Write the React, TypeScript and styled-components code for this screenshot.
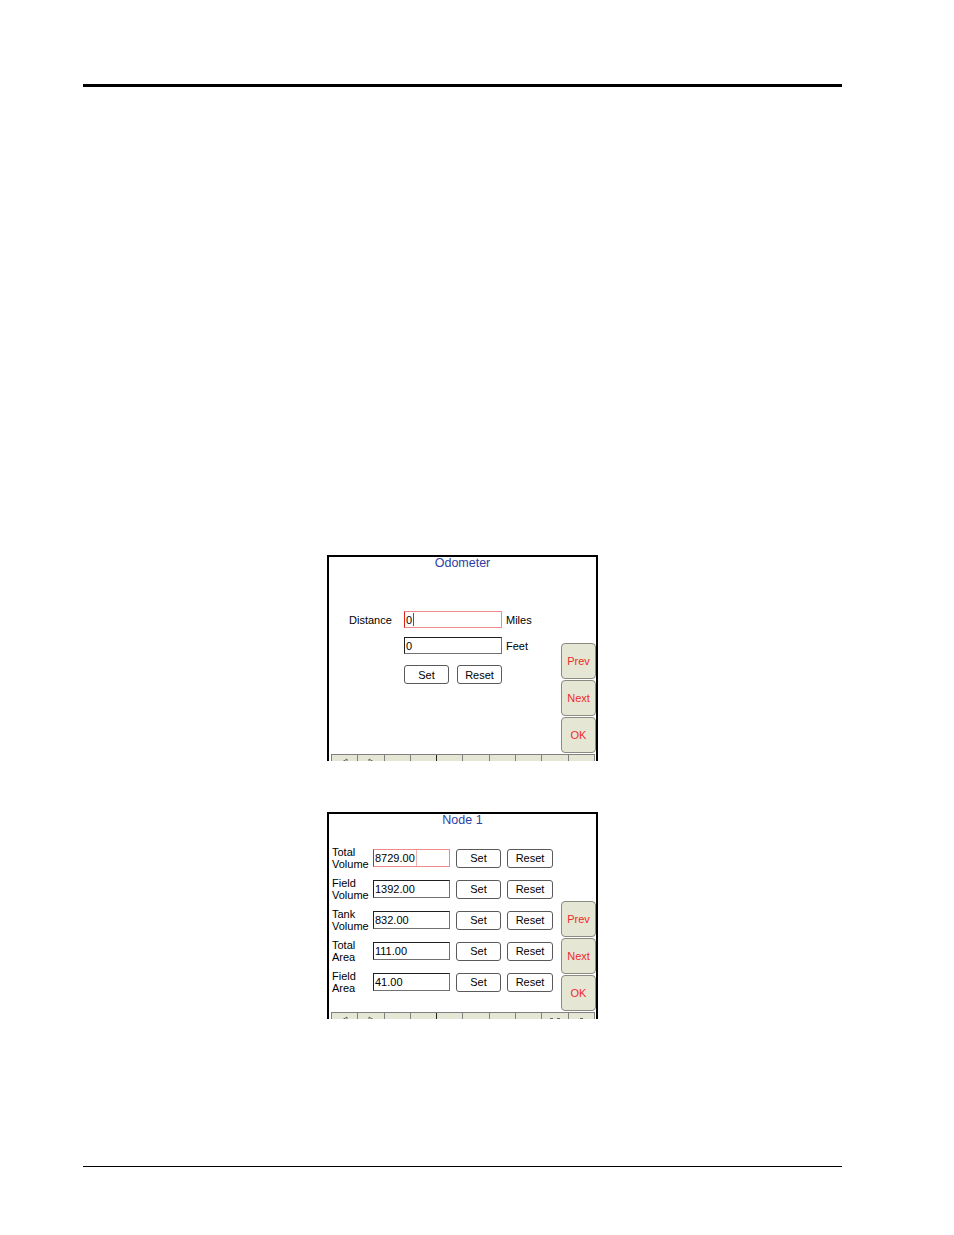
import React from 'react';
import styled, { createGlobalStyle } from 'styled-components';

const GlobalStyle = createGlobalStyle`
  html, body {
    margin: 0;
    padding: 0;
    background: #ffffff;
  }
  body {
    font-family: "Liberation Sans", Arial, sans-serif;
  }
`;

const Page = styled.div`
  width: 954px;
  height: 1235px;
  box-sizing: border-box;
  padding: 84px 112px 0 83px;
  display: flex;
  flex-direction: column;
  align-items: center;
`;

const TopRule = styled.div`
  width: 100%;
  height: 3px;
  background: #000;
`;

const Figures = styled.div`
  margin-top: 468px;
  display: flex;
  flex-direction: column;
  align-items: center;
  gap: 51px;
`;

const BottomRule = styled.div`
  margin-top: 147px;
  width: 100%;
  height: 1px;
  background: #000;
`;

const Screen = styled.div<{ $h: number }>`
  width: 271px;
  height: ${(p) => p.$h}px;
  box-sizing: border-box;
  border: 2px solid #000;
  border-bottom: none;
  background: #fff;
  overflow: hidden;
  display: flex;
  flex-direction: column;
  font-family: "Liberation Sans", Arial, sans-serif;
  font-size: 11px;
  color: #000;
`;

const Title = styled.div`
  height: 16px;
  line-height: 13px;
  text-align: center;
  color: #2b3fa6;
  font-size: 12.5px;
`;

const Body = styled.div`
  flex: 1;
  display: grid;
  grid-template-columns: 1fr 35px;
  min-height: 0;
`;

const SideCol = styled.div`
  display: flex;
  flex-direction: column;
  justify-content: flex-end;
  gap: 1px;
  padding-bottom: 1px;
`;

const SideButton = styled.div`
  height: 36px;
  box-sizing: border-box;
  border: 1px solid #8a8a80;
  border-radius: 4px;
  background: #e6e6d4;
  color: #ee2a2a;
  font-size: 11px;
  display: flex;
  align-items: center;
  justify-content: center;
`;

const TabStrip = styled.div`
  margin: 0 1px 0 2px;
  height: 6px;
  flex-shrink: 0;
  overflow: hidden;
  display: grid;
  grid-template-columns: repeat(10, 1fr);
  border-top: 1px solid #808080;
  border-left: 1px solid #808080;
  background: #e6e6d4;
`;

const Tab = styled.div<{ $dark?: boolean }>`
  border-right: 1px solid ${(p) => (p.$dark ? '#202020' : '#808080')};
  display: flex;
  justify-content: center;
  padding-top: 3px;
`;

/* odometer screen */
const OdoMain = styled.div`
  padding: 38px 0 0 20px;
  display: grid;
  grid-template-columns: 51px 98px auto;
  grid-auto-rows: min-content;
  column-gap: 4px;
  align-content: start;
`;

const Label = styled.div`
  font-size: 11px;
  align-self: center;
  line-height: 12px;
`;

const Spacer = styled.div<{ $h: number }>`
  height: ${(p) => p.$h}px;
  grid-column: 1 / 4;
`;

const Field = styled.div<{ $active?: boolean }>`
  height: 17px;
  box-sizing: border-box;
  border: 1px solid ${(p) => (p.$active ? '#f08a8a' : '#707070')};
  border-left-color: ${(p) => (p.$active ? '#e01e1e' : '#202020')};
  border-top-color: ${(p) => (p.$active ? '#f08a8a' : '#202020')};
  display: flex;
  align-items: center;
  font-size: 11px;
  padding-left: 1px;
  background: #fff;
  position: relative;
`;

const Caret = styled.span`
  display: inline-block;
  width: 1px;
  height: 13px;
  background: #d02020;
  margin-left: 1px;
`;

const Divider = styled.span`
  position: absolute;
  left: 42px;
  top: 0;
  bottom: 0;
  width: 1px;
  background: #f3b0b0;
`;

const Btn = styled.div<{ $w: number }>`
  width: ${(p) => p.$w}px;
  height: 19px;
  box-sizing: border-box;
  border: 1px solid #5a5a5a;
  border-radius: 3px;
  display: flex;
  align-items: center;
  justify-content: center;
  font-size: 11px;
  background: #fff;
`;

const BtnRow = styled.div<{ $gap: number }>`
  display: flex;
  gap: ${(p) => p.$gap}px;
`;

/* node screen */
const NodeMain = styled.div`
  padding: 16px 0 0 3px;
  display: flex;
  flex-direction: column;
  gap: 11px;
`;

const NodeRow = styled.div`
  display: grid;
  grid-template-columns: 35px 77px 45px 46px;
  column-gap: 6px;
  align-items: center;
  height: 20px;
`;

const TwoLine = styled.div`
  font-size: 11px;
  line-height: 12px;
  white-space: nowrap;
`;

const NodeField = styled(Field)`
  height: 18px;
`;

const Arrow = ({ dir }: { dir: 'left' | 'right' }) => (
  <svg width="8" height="8" viewBox="0 0 8 8">
    <path
      d={dir === 'left' ? 'M6 1 L1 4 L6 7 Z' : 'M2 1 L7 4 L2 7 Z'}
      fill="none"
      stroke="#666"
      strokeWidth="1"
    />
  </svg>
);

const Dashes = ({ n }: { n: number }) => (
  <svg width="12" height="6" viewBox="0 0 12 6">
    {n === 2 ? (
      <>
        <line x1="1" y1="2.5" x2="4" y2="2.5" stroke="#666" />
        <line x1="8" y1="2.5" x2="11" y2="2.5" stroke="#666" />
      </>
    ) : (
      <line x1="5" y1="2.5" x2="8" y2="2.5" stroke="#666" />
    )}
  </svg>
);

const SideButtons = () => (
  <SideCol>
    <SideButton>Prev</SideButton>
    <SideButton>Next</SideButton>
    <SideButton>OK</SideButton>
  </SideCol>
);

const Tabs = ({ endMarks }: { endMarks?: boolean }) => (
  <TabStrip>
    <Tab>
      <Arrow dir="left" />
    </Tab>
    <Tab>
      <Arrow dir="right" />
    </Tab>
    <Tab />
    <Tab $dark />
    <Tab />
    <Tab />
    <Tab />
    <Tab />
    <Tab>{endMarks && <Dashes n={2} />}</Tab>
    <Tab>{endMarks && <Dashes n={1} />}</Tab>
  </TabStrip>
);

const nodeRows = [
  ['Total', 'Volume', '8729.00'],
  ['Field', 'Volume', '1392.00'],
  ['Tank', 'Volume', '832.00'],
  ['Total', 'Area', '111.00'],
  ['Field', 'Area', '41.00'],
];

export default function App() {
  return (
    <>
      <GlobalStyle />
      <Page>
        <TopRule />
        <Figures>
          <Screen $h={206}>
            <Title>Odometer</Title>
            <Body>
              <OdoMain>
                <Label>Distance</Label>
                <Field $active>
                  0<Caret />
                </Field>
                <Label>Miles</Label>
                <Spacer $h={9} />
                <div />
                <Field>0</Field>
                <Label>Feet</Label>
                <Spacer $h={11} />
                <div />
                <BtnRow $gap={8}>
                  <Btn $w={45}>Set</Btn>
                  <Btn $w={45}>Reset</Btn>
                </BtnRow>
              </OdoMain>
              <SideButtons />
            </Body>
            <Tabs />
          </Screen>

          <Screen $h={207}>
            <Title>Node 1</Title>
            <Body>
              <NodeMain>
                {nodeRows.map(([a, b, v], i) => (
                  <NodeRow key={i}>
                    <TwoLine>
                      {a}
                      <br />
                      {b}
                    </TwoLine>
                    <NodeField $active={i === 0}>
                      {v}
                      {i === 0 && <Divider />}
                    </NodeField>
                    <Btn $w={45}>Set</Btn>
                    <Btn $w={46}>Reset</Btn>
                  </NodeRow>
                ))}
              </NodeMain>
              <SideButtons />
            </Body>
            <Tabs endMarks />
          </Screen>
        </Figures>
        <BottomRule />
      </Page>
    </>
  );
}
